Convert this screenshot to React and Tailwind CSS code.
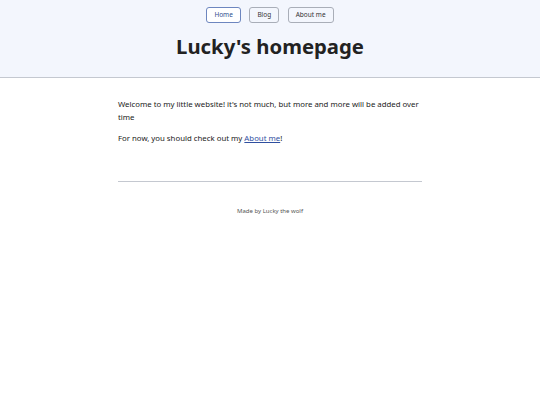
import React from 'react';

const NavButton = ({ label, active }) => (
    <a
        href="#"
        className={
            active
                ? 'px-[7px] h-[16px] flex items-center rounded-[3px] border border-[#6d86bf] text-[#2f4f8f] bg-white text-[6.5px] leading-none'
                : 'px-[7px] h-[16px] flex items-center rounded-[3px] border border-[#a9aeb8] text-[#333] bg-[#f3f6fd] text-[6.5px] leading-none'
        }
    >
        {label}
    </a>
);

export default function App() {
    return (
        <div className="min-h-screen bg-white text-[#222]" style={{ fontFamily: '"Noto Sans", sans-serif' }}>
            <header className="bg-[#f3f6fd] border-b border-[#c4c8d0] h-[78px] flex flex-col items-center">
                <nav className="flex gap-[8.5px] pt-[7px]">
                    <NavButton label="Home" active />
                    <NavButton label="Blog" />
                    <NavButton label="About me" />
                </nav>
                <h1 className="mt-[9px] text-[20.3px] font-bold leading-[28px] text-[#222]">Lucky's homepage</h1>
            </header>

            <main className="w-[304px] mx-auto pt-[20px] text-[7.8px] leading-[12.5px] text-[#222]">
                <p>Welcome to my little website! it's not much, but more and more will be added over time</p>
                <p className="mt-[9px]">
                    For now, you should check out my{' '}
                    <a href="#" className="text-[#2f4f9f] underline">About me</a>!
                </p>
                <hr className="mt-[36px] border-t border-[#c4c8d0]" />
                <footer className="pt-[23px] text-center text-[6px] text-[#555]">Made by Lucky the wolf</footer>
            </main>
        </div>
    );
}
